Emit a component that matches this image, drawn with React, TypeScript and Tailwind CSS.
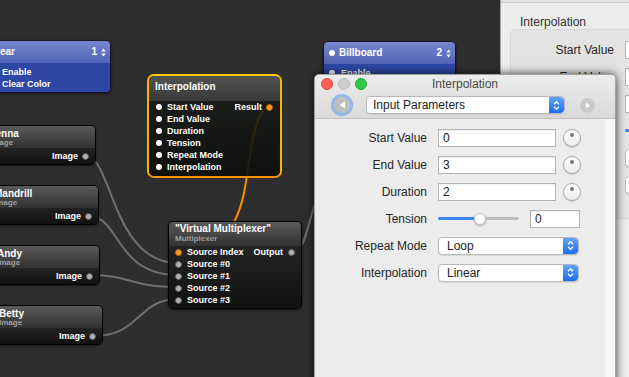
import React from "react";

const sans = "font-['Liberation_Sans',Arial,sans-serif]";

function Dot({ kind }: { kind: "white" | "gray" | "orange" }) {
  const cls =
    kind === "white"
      ? "w-[6px] h-[6px] bg-white"
      : kind === "orange"
      ? "w-[7px] h-[7px] bg-[#ff9a1f] border border-[#b86200]"
      : "w-[7px] h-[7px] bg-[#b2b2b2] border border-[#5e5e5e]";
  return <span className={`shrink-0 rounded-full ${cls}`} />;
}

function MiniStepper() {
  return (
    <svg width="5" height="9" viewBox="0 0 5 9">
      <path d="M2.5 0.5 L4.6 3.6 H0.4 Z M2.5 8.5 L4.6 5.4 H0.4 Z" fill="#fff" />
    </svg>
  );
}

function Cables() {
  return (
    <svg className="absolute inset-0" width="629" height="377" fill="none">
      <g stroke="#707070" strokeWidth="2">
        <path d="M86,156 C112,156 112,263 178,263" />
        <path d="M89,216 C120,216 115,275 178,275" />
        <path d="M91,275 C130,275 130,287 178,287" />
        <path d="M94,336 C140,336 138,299 178,299" />
        <path d="M292,251 C306,251 306,228 318,195" />
      </g>
      <path d="M270,107 C255,108 251,150 246,182 C241,214 230,252 178,252" stroke="#ff8a00" strokeWidth="2" />
    </svg>
  );
}

function ImageNode({ className, title }: { className: string; title: string }) {
  return (
    <div className={`absolute h-[40px] rounded-[5px] border border-black overflow-hidden flex flex-col shadow-[0_1px_2px_rgba(0,0,0,0.5)] ${className}`}>
      <div className="h-[22px] pl-[7px] pt-[2px] bg-gradient-to-b from-[#595959] to-[#323232]">
        <div className="text-[10px] leading-[11px] font-bold text-white">{title}</div>
        <div className="text-[8px] leading-[8px] font-bold text-[#9e9e9e]">Image</div>
      </div>
      <div className="flex-1 bg-gradient-to-b from-[#232323] to-[#111111] flex items-center justify-end gap-[4px] pr-[6px]">
        <span className="text-[9px] font-bold text-white leading-none">Image</span>
        <Dot kind="gray" />
      </div>
    </div>
  );
}

function PortRow({ label, dot, right }: { label: string; dot: "white" | "gray" | "orange"; right?: React.ReactNode }) {
  return (
    <div className="h-[12px] flex items-center justify-between">
      <div className="flex items-center gap-[5px]">
        <Dot kind={dot} />
        <span className="text-[9px] font-bold text-white leading-none">{label}</span>
      </div>
      {right}
    </div>
  );
}

function InterpolationNode() {
  return (
    <div className="absolute left-[147px] top-[74px] w-[135px] h-[104px] rounded-[7px] border-2 border-[#fbb400] border-t-[#f8cc00] border-b-[#ff9200] overflow-hidden flex flex-col">
      <div className="h-[25px] shrink-0 bg-gradient-to-b from-[#525252] to-[#393939] pl-[6px] pt-[5px] text-[10px] font-bold text-white leading-[12px]">
        Interpolation
      </div>
      <div className="flex-1 bg-gradient-to-b from-[rgba(22,26,22,0.86)] to-[rgba(12,14,12,0.9)] pl-[7px] pr-[7px]">
        <PortRow
          label="Start Value"
          dot="white"
          right={
            <div className="flex items-center gap-[4px]">
              <span className="text-[9px] font-bold text-white leading-none">Result</span>
              <Dot kind="orange" />
            </div>
          }
        />
        <PortRow label="End Value" dot="white" />
        <PortRow label="Duration" dot="white" />
        <PortRow label="Tension" dot="white" />
        <PortRow label="Repeat Mode" dot="white" />
        <PortRow label="Interpolation" dot="white" />
      </div>
    </div>
  );
}

function MultiplexerNode() {
  return (
    <div className="absolute left-[168px] top-[221px] w-[134px] h-[88px] rounded-[5px] border border-black overflow-hidden flex flex-col shadow-[0_1px_3px_rgba(0,0,0,0.6)]">
      <div className="h-[24px] shrink-0 pl-[6px] pt-[1px] bg-gradient-to-b from-[#5a5a5a] to-[#333333]">
        <div className="text-[10px] leading-[11px] font-bold text-white">"Virtual Multiplexer"</div>
        <div className="text-[8px] leading-[9px] font-bold text-[#9e9e9e]">Multiplexer</div>
      </div>
      <div className="flex-1 bg-gradient-to-b from-[#242424] to-[#111111] pl-[6px] pr-[6px]">
        <PortRow
          label="Source Index"
          dot="orange"
          right={
            <div className="flex items-center gap-[5px]">
              <span className="text-[9px] font-bold text-white leading-none">Output</span>
              <Dot kind="gray" />
            </div>
          }
        />
        <PortRow label="Source #0" dot="gray" />
        <PortRow label="Source #1" dot="gray" />
        <PortRow label="Source #2" dot="gray" />
        <PortRow label="Source #3" dot="gray" />
      </div>
    </div>
  );
}

function BlueNode({ className, title, layer, headerDot, rows }: { className: string; title: string; layer: string; headerDot?: boolean; rows: string[] }) {
  return (
    <div className={`absolute rounded-[5px] border border-[#15152a] overflow-hidden flex flex-col shadow-[0_1px_3px_rgba(0,0,0,0.6)] ${className}`}>
      <div className="h-[22px] shrink-0 bg-gradient-to-b from-[#7786cd] to-[#5163b6] flex items-center justify-between pl-[5px] pr-[4px]">
        <div className="flex items-center gap-[4px]">
          {headerDot && <Dot kind="white" />}
          <span className="text-[10px] font-bold text-white leading-none">{title}</span>
        </div>
        <div className="flex items-center gap-[4px]">
          <span className="text-[10px] font-bold text-white leading-none">{layer}</span>
          <MiniStepper />
        </div>
      </div>
      <div className="flex-1 bg-[#2e47a4] pl-[5px] pt-[3px]">
        {rows.map((r) => (
          <div key={r} className="h-[12px] flex items-center gap-[6px]">
            <Dot kind="white" />
            <span className="text-[9px] font-bold text-white leading-none">{r}</span>
          </div>
        ))}
      </div>
    </div>
  );
}

function PopupArrows() {
  return (
    <span className="w-[15px] shrink-0 rounded-r-[4px] bg-gradient-to-b from-[#5ea3f8] to-[#1a6cef] flex items-center justify-center">
      <svg width="7" height="11" viewBox="0 0 7 11">
        <path d="M1 4.2 L3.5 1.7 L6 4.2 M1 6.8 L3.5 9.3 L6 6.8" fill="none" stroke="#fff" strokeWidth="1.3" />
      </svg>
    </span>
  );
}

function Popup({ label, className }: { label: string; className: string }) {
  return (
    <div className={`h-[18px] flex rounded-[4px] bg-white border border-[#b9b9b9] shadow-[0_1px_1px_rgba(0,0,0,0.08)] overflow-hidden ${className}`}>
      <span className="flex-1 flex items-center pl-[8px] text-[12px] text-[#222] leading-none">{label}</span>
      <PopupArrows />
    </div>
  );
}

function Field({ value, className }: { value: string; className: string }) {
  return (
    <div className={`h-[18px] shrink-0 bg-white border border-[#b4b4b4] shadow-[inset_0_1px_0_rgba(0,0,0,0.06)] flex items-center pl-[4px] text-[12px] text-[#222] leading-none ${className}`}>
      {value}
    </div>
  );
}

function Knob() {
  return (
    <div className="ml-[7px] w-[18px] h-[18px] shrink-0 rounded-full border border-[#a8a8a8] bg-gradient-to-b from-white to-[#ececec] shadow-[0_1px_1px_rgba(0,0,0,0.15)] flex justify-center pt-[3px]">
      <span className="w-[4px] h-[4px] rounded-full bg-[#7a7a7a]" />
    </div>
  );
}

function Slider() {
  return (
    <div className="w-[81px] shrink-0 flex items-center">
      <span className="w-[36px] h-[3px] rounded-l-full bg-[#3a86f5]" />
      <span className="w-[12px] h-[12px] shrink-0 rounded-full bg-white border border-[#c4c4c4] shadow-[0_1px_2px_rgba(0,0,0,0.3)]" />
      <span className="flex-1 h-[3px] rounded-r-full bg-[#bdbdbd]" />
    </div>
  );
}

function InspectorGrid({ labelW }: { labelW: string }) {
  const rows: [string, React.ReactNode][] = [
    ["Start Value", <><Field value="0" className="w-[118px]" /><Knob /></>],
    ["End Value", <><Field value="3" className="w-[118px]" /><Knob /></>],
    ["Duration", <><Field value="2" className="w-[118px]" /><Knob /></>],
    ["Tension", <><Slider /><Field value="0" className="ml-[11px] w-[50px]" /></>],
    ["Repeat Mode", <Popup label="Loop" className="w-[141px]" />],
    ["Interpolation", <Popup label="Linear" className="w-[141px]" />],
  ];
  return (
    <div className="flex flex-col">
      {rows.map(([label, ctl]) => (
        <div key={label} className="h-[27px] flex items-center">
          <span className={`shrink-0 text-right text-[12px] text-[#262626] leading-none ${labelW}`}>{label}</span>
          <div className="ml-[11px] flex items-center">{ctl}</div>
        </div>
      ))}
    </div>
  );
}

function BackgroundInspector() {
  return (
    <div className="absolute left-[500px] top-0 w-[160px] h-[377px] bg-[#ececec] border-l border-[#9c9c9c] flex flex-col">
      <div className="h-[3px] bg-[#e2e2e2] border-b border-[#cdcdcd]" />
      <div className="pl-[19px] pt-[12px] h-[26px] text-[12px] leading-[14px] text-[#333]">Interpolation</div>
      <div className="ml-[9px] h-[190px] rounded-[5px] bg-[#e3e3e3] border border-[#d6d6d6] pt-[6px] overflow-hidden">
        <InspectorGrid labelW="w-[103px]" />
      </div>
    </div>
  );
}

function InspectorWindow() {
  return (
    <div className="absolute left-[314px] top-[74px] w-[302px] h-[320px] rounded-t-[5px] border border-[#a0a0a0] bg-[#ececec] overflow-hidden flex flex-col shadow-[0_0_10px_rgba(0,0,0,0.75)]">
      <div className="bg-gradient-to-b from-[#ececec] to-[#dadada] border-b border-[#c2c2c2]">
        <div className="h-[17px] relative flex items-center pl-[6px] gap-[5px]">
          <span className="w-[12px] h-[12px] rounded-full bg-[#fc5f57] border border-[#de4640]" />
          <span className="w-[12px] h-[12px] rounded-full bg-[#cfcfcf] border border-[#bcbcbc]" />
          <span className="w-[12px] h-[12px] rounded-full bg-[#33c748] border border-[#22a835]" />
          <span className="absolute inset-x-0 top-0 h-[17px] flex items-center justify-center text-[12px] text-[#4a4a4a] leading-none">Interpolation</span>
        </div>
        <div className="h-[26px] flex items-center pl-[19px]">
          <span className="w-[16px] h-[16px] shrink-0 rounded-full bg-[#bfbfbf] shadow-[0_0_0_3px_rgba(90,150,240,0.55)] flex items-center justify-center">
            <svg width="7" height="8" viewBox="0 0 7 8"><path d="M6 0.5 L6 7.5 L0.8 4 Z" fill="#fff" /></svg>
          </span>
          <Popup label="Input Parameters" className="ml-[16px] w-[199px] [&>span:first-child]:pl-[6px]" />
          <span className="ml-[15px] w-[15px] h-[15px] shrink-0 rounded-full bg-[#cacaca] flex items-center justify-center">
            <svg width="6" height="7" viewBox="0 0 6 7"><path d="M0.8 0.5 L0.8 6.5 L5.4 3.5 Z" fill="#fff" /></svg>
          </span>
        </div>
      </div>
      <div className="flex-1 flex">
        <div className="w-[290px] pt-[5px]">
          <InspectorGrid labelW="w-[112px]" />
        </div>
        <div className="flex-1 bg-[#f6f6f6]" />
      </div>
    </div>
  );
}

export default function App() {
  return (
    <div className={`relative w-[629px] h-[377px] overflow-hidden bg-[#2e2e2e] ${sans}`}>
      <Cables />
      <BlueNode className="left-[-16px] top-[40px] w-[127px] h-[53px]" title="Clear" layer="1" rows={["Enable", "Clear Color"]} />
      <BlueNode className="left-[323px] top-[41px] w-[133px] h-[60px]" title="Billboard" layer="2" headerDot rows={["Enable"]} />
      <ImageNode className="left-[-18px] top-[125px] w-[114px]" title="Jenna" />
      <ImageNode className="left-[-14px] top-[185px] w-[113px]" title="Mandrill" />
      <ImageNode className="left-[-11px] top-[245px] w-[111px]" title="Andy" />
      <ImageNode className="left-[-9px] top-[305px] w-[112px]" title="Betty" />
      <InterpolationNode />
      <MultiplexerNode />
      <BackgroundInspector />
      <InspectorWindow />
    </div>
  );
}
